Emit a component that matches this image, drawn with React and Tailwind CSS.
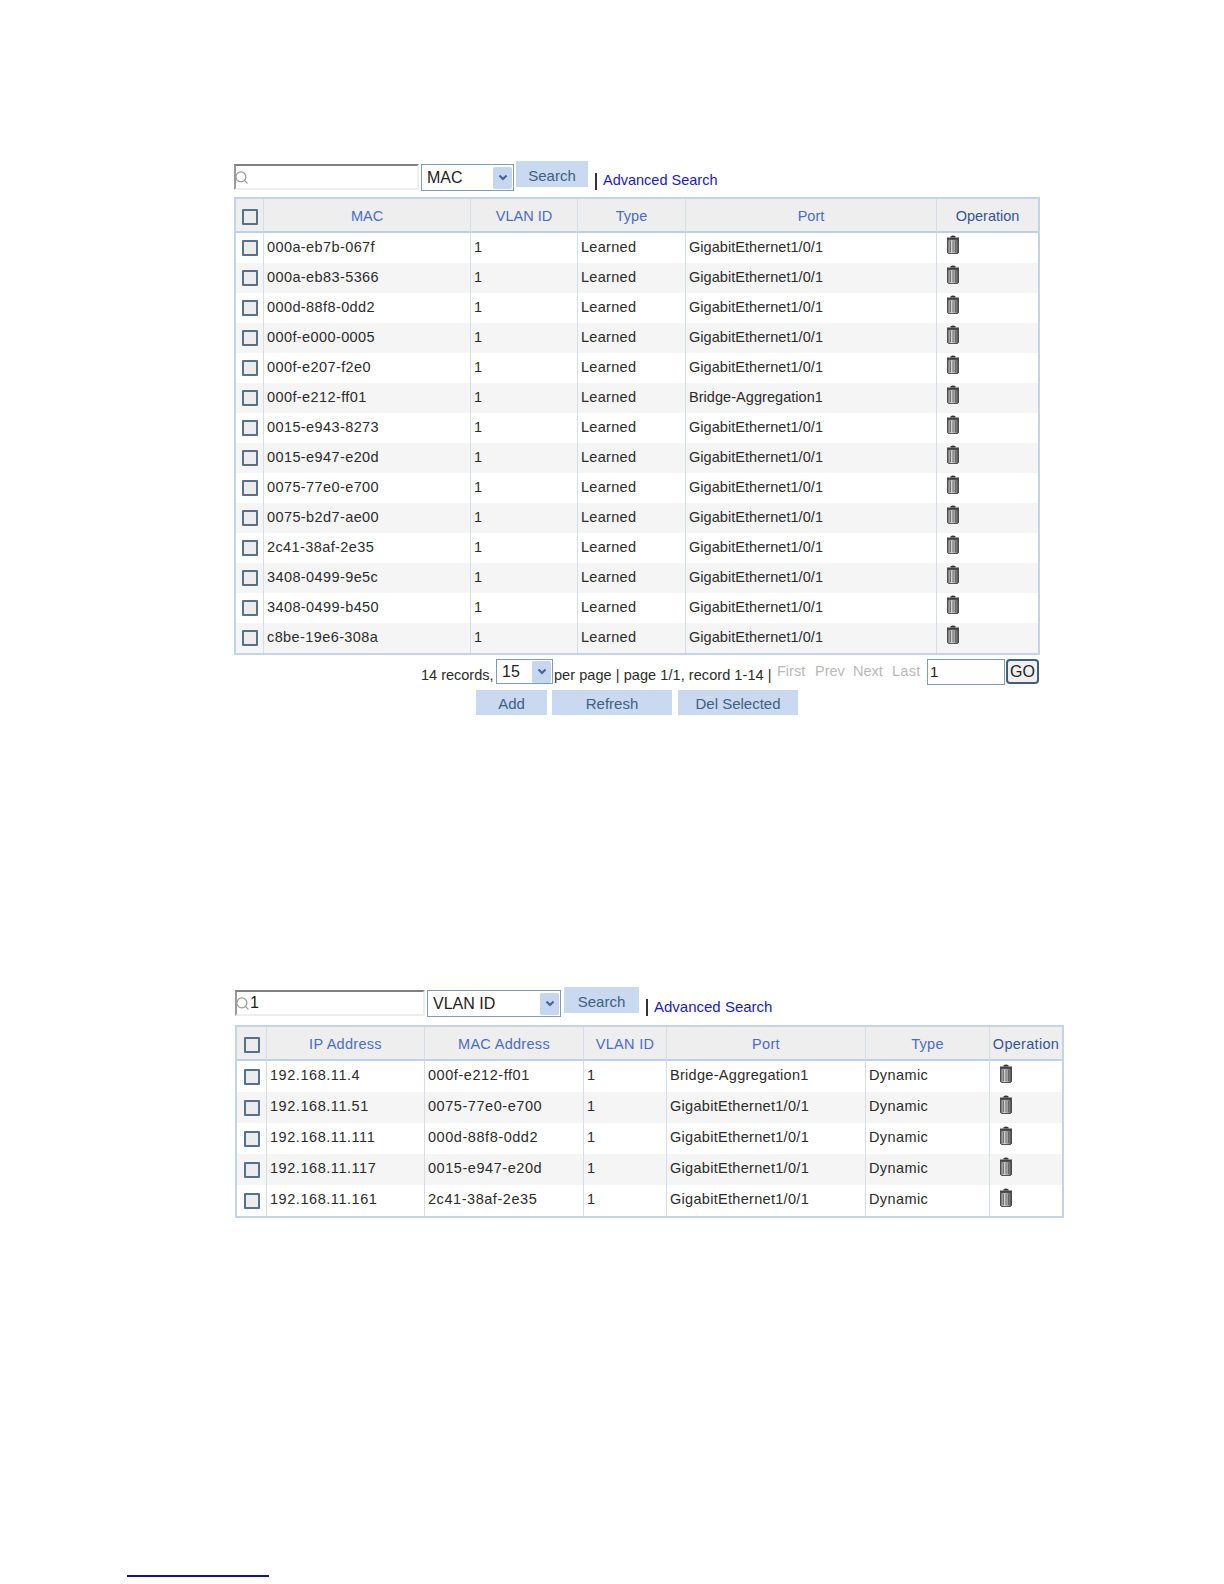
import { Search } from 'lucide-react'

const macRows = [
  ['000a-eb7b-067f', 'GigabitEthernet1/0/1'],
  ['000a-eb83-5366', 'GigabitEthernet1/0/1'],
  ['000d-88f8-0dd2', 'GigabitEthernet1/0/1'],
  ['000f-e000-0005', 'GigabitEthernet1/0/1'],
  ['000f-e207-f2e0', 'GigabitEthernet1/0/1'],
  ['000f-e212-ff01', 'Bridge-Aggregation1'],
  ['0015-e943-8273', 'GigabitEthernet1/0/1'],
  ['0015-e947-e20d', 'GigabitEthernet1/0/1'],
  ['0075-77e0-e700', 'GigabitEthernet1/0/1'],
  ['0075-b2d7-ae00', 'GigabitEthernet1/0/1'],
  ['2c41-38af-2e35', 'GigabitEthernet1/0/1'],
  ['3408-0499-9e5c', 'GigabitEthernet1/0/1'],
  ['3408-0499-b450', 'GigabitEthernet1/0/1'],
  ['c8be-19e6-308a', 'GigabitEthernet1/0/1'],
]

const arpRows = [
  ['192.168.11.4', '000f-e212-ff01', 'Bridge-Aggregation1'],
  ['192.168.11.51', '0075-77e0-e700', 'GigabitEthernet1/0/1'],
  ['192.168.11.111', '000d-88f8-0dd2', 'GigabitEthernet1/0/1'],
  ['192.168.11.117', '0015-e947-e20d', 'GigabitEthernet1/0/1'],
  ['192.168.11.161', '2c41-38af-2e35', 'GigabitEthernet1/0/1'],
]

function TrashIcon() {
  return (
    <svg width="14" height="19" viewBox="0 0 14 19" className="block">
      <defs>
        <linearGradient id="trashBody" x1="0" x2="1" y1="0" y2="0">
          <stop offset="0" stopColor="#666" />
          <stop offset="0.35" stopColor="#d4d4d4" />
          <stop offset="0.7" stopColor="#9a9a9a" />
          <stop offset="1" stopColor="#444" />
        </linearGradient>
      </defs>
      <path d="M4.5 1.2Q7 0 9.5 1.2V2.5h-5z" fill="#333" />
      <path d="M1 2.5h12v2.2H1z" fill="#444" />
      <path d="M1.5 4.7h11v12.8l-1 1h-9l-1-1z" fill="url(#trashBody)" stroke="#333" strokeWidth="0.8" />
      <path d="M4.5 6v11M7 6v11M9.5 6v11" stroke="#555" strokeWidth="0.7" />
    </svg>
  )
}

function Checkbox() {
  return <span className="block w-4 h-4 mx-auto border-2 border-[#56718c] bg-[#ececec] rounded-[1px]" />
}

function FakeSelect({ value, className }) {
  return (
    <div className={`flex items-center justify-between border border-[#7f9db9] bg-white pl-[5px] pr-px text-[16px] text-[#222] ${className}`}>
      <span>{value}</span>
      <span className="flex items-center justify-center w-[19px] h-[22px] bg-[#c5d6f0] rounded-[2px]">
        <svg width="10" height="8" viewBox="0 0 10 8">
          <path d="M1.5 1.5 5 5l3.5-3.5" fill="none" stroke="#4a6690" strokeWidth="2.2" />
        </svg>
      </span>
    </div>
  )
}

function SearchBar({ inputClass, selectClass, buttonClass, gapClass, linkClass, value, option }) {
  return (
    <div className="flex items-start h-full">
      <div className={`flex items-center mt-[3px] h-[26px] border-2 border-b-[#eeeeee] border-r-[#eeeeee] border-t-[#808080] border-l-[#9a9a9a] bg-white text-[16px] text-[#222] ${inputClass}`}>
        <Search className="w-[15px] h-[15px] -ml-[2px] text-[#9a9a9a] shrink-0" strokeWidth={2} />
        <span>{value}</span>
      </div>
      <FakeSelect value={option} className={`mt-[3px] ${selectClass}`} />
      <div className={`flex items-center justify-center pt-[5px] h-[26px] bg-[#c8d9f0] text-[15px] text-[#3f5f85] ${buttonClass}`}>Search</div>
      <div className={`flex items-center mt-[10px] h-[20px] ${gapClass}`}>
        <span className="w-[2px] h-[17px] bg-[#333] mr-[6px]" />
        <a className={`text-[#1a1ac8] ${linkClass}`}>Advanced Search</a>
      </div>
    </div>
  )
}

function DataTable({ width, cols, heads, rows, rowClass, headClass, cellClasses, iconClass }) {
  return (
    <div className={`border-2 border-[#c3d3e8] ${width}`}>
      <table className="w-full table-fixed border-separate border-spacing-0 text-[14.5px] text-[#2b2b2b]">
        <thead>
          <tr className="h-[34px] bg-[#eeeeee]">
            <th className={`${cols[0]} pt-[4px] border-r border-b-2 border-r-[#d5dde8] border-b-[#bcd0ea] font-normal`}>
              <Checkbox />
            </th>
            {heads.map((h, i) => (
              <th
                key={h}
                className={`${cols[i + 1]} pt-[4px] border-b-2 border-b-[#bcd0ea] border-r-[#d5dde8] font-normal ${headClass} ${i < heads.length - 1 ? 'border-r' : ''} ${h === 'Operation' ? 'text-[#33549a]' : 'text-[#4a6cc9]'}`}
              >
                {h}
              </th>
            ))}
          </tr>
        </thead>
        <tbody>
          {rows.map((r, i) => (
            <tr key={i} className={`${rowClass} ${i % 2 ? 'bg-[#f5f5f5]' : 'bg-white'}`}>
              <td className="border-r border-[#d5dde8]">
                <Checkbox />
              </td>
              {r.map((c, j) => (
                <td key={j} className={`border-r border-[#d5dde8] pl-[3px] whitespace-nowrap ${cellClasses[j]}`}>
                  {c}
                </td>
              ))}
              <td className={`pl-[9px] ${iconClass}`}>
                <TrashIcon />
              </td>
            </tr>
          ))}
        </tbody>
      </table>
    </div>
  )
}

function ActionButton({ children, className }) {
  return (
    <div className={`flex items-center justify-center pt-[3px] h-[25px] bg-[#c8d9f0] text-[#3f5f85] ${className}`}>{children}</div>
  )
}

function App() {
  return (
    <div className="w-[1224px] h-[1584px] overflow-hidden bg-white pt-[161px] font-['Liberation_Sans',Arial,sans-serif]">
      <section className="ml-[234px]">
        <div className="h-[36px]">
          <SearchBar
            inputClass="w-[185px]"
            selectClass="w-[93px] h-[27px] ml-[2px]"
            buttonClass="w-[72px] ml-[2px]"
            gapClass="ml-[7px]"
            linkClass="text-[14.5px]"
            value=""
            option="MAC"
          />
        </div>
        <DataTable
          width="w-[806px]"
          cols={['w-[28px]', 'w-[207px]', 'w-[107px]', 'w-[108px]', 'w-[251px]', 'w-[101px]']}
          heads={['MAC', 'VLAN ID', 'Type', 'Port', 'Operation']}
          rows={macRows.map(([mac, port]) => [mac, '1', 'Learned', port])}
          rowClass="h-[30px]"
          headClass=""
          cellClasses={['tracking-[0.4px] pb-[1px]', 'pb-[1px]', 'tracking-[0.3px] pb-[1px]', 'tracking-[0.05px] pb-[1px]']}
          iconClass="pb-[7px]"
        />
        <div className="flex items-start mt-[4px] ml-[187px] h-[31px] text-[14.5px] text-[#2b2b2b]">
          <span className="mt-[6px] w-[75px] whitespace-nowrap">14 records,</span>
          <FakeSelect value="15" className="w-[57px] h-[25px]" />
          <span className="mt-[6px] ml-px w-[223px] whitespace-nowrap tracking-[0.06px]">per page | page 1/1, record 1-14 |</span>
          <div className="flex mt-[2px] w-[150px] text-[#b9b9b9]">
            <span className="w-[38px]">First</span>
            <span className="w-[38px]">Prev</span>
            <span className="w-[39px]">Next</span>
            <span className="tracking-[0.3px]">Last</span>
          </div>
          <div className="flex items-center w-[78px] h-[26px] border border-[#7f9db9] bg-white pl-[2px] text-[15px] text-[#222]">1</div>
          <div className="flex items-center justify-center ml-px w-[33px] h-[25px] border-2 border-[#3f5f7f] rounded-[4px] bg-[#f0f0f0] text-[16px] text-[#222]">GO</div>
        </div>
        <div className="flex ml-[242px] text-[15px]">
          <ActionButton className="w-[71px]">Add</ActionButton>
          <ActionButton className="w-[120px] ml-[5px]">Refresh</ActionButton>
          <ActionButton className="w-[120px] ml-[6px]">Del Selected</ActionButton>
        </div>
      </section>

      <section className="ml-[235px] mt-[272px]">
        <div className="h-[38px]">
          <SearchBar
            inputClass="w-[190px]"
            selectClass="w-[134px] h-[27px] ml-[2px]"
            buttonClass="w-[75px] ml-[3px]"
            gapClass="ml-[7px]"
            linkClass="text-[15px]"
            value="1"
            option="VLAN ID"
          />
        </div>
        <DataTable
          width="w-[829px]"
          cols={['w-[30px]', 'w-[158px]', 'w-[159px]', 'w-[83px]', 'w-[199px]', 'w-[124px]', 'w-[72px]']}
          heads={['IP Address', 'MAC Address', 'VLAN ID', 'Port', 'Type', 'Operation']}
          rows={arpRows.map(([ip, mac, port]) => [ip, mac, '1', port, 'Dynamic'])}
          rowClass="h-[31px]"
          headClass="tracking-[0.3px]"
          cellClasses={['tracking-[0.55px] pb-[2px]', 'tracking-[0.55px] pb-[2px]', 'pb-[2px]', 'tracking-[0.3px] pb-[2px]', 'tracking-[0.4px] pb-[2px]']}
          iconClass="pb-[6px]"
        />
      </section>

      <div className="ml-[127px] mt-[357px] w-[142px] h-[2px] bg-[#12129a]" />
    </div>
  )
}

export default App
